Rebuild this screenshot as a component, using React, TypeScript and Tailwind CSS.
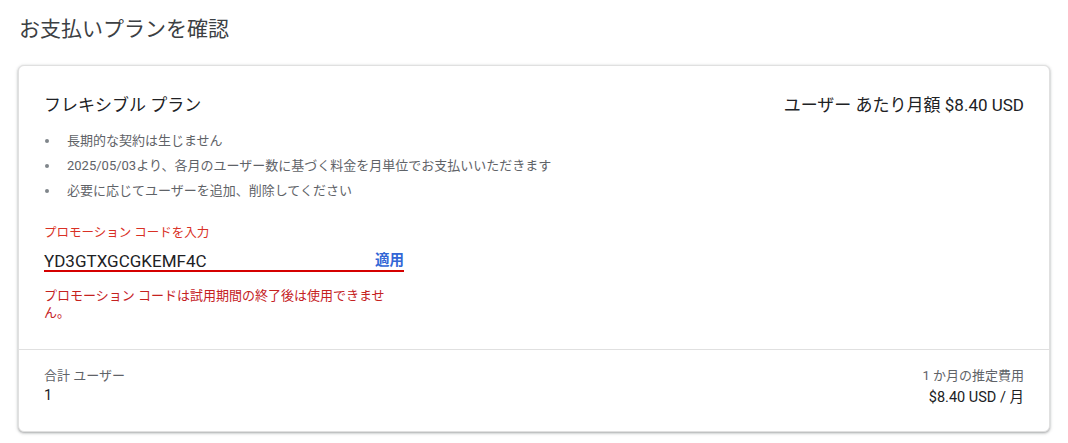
import React from "react";

export default function App() {
  const font = { fontFamily: 'Roboto, "Noto Sans CJK JP", sans-serif' };
  return (
    <div className="w-[1068px] h-[443px] bg-white px-[18px] pt-[13px]" style={font}>
      <h1 className="text-[21px] leading-[32px] text-[#3c4043] pl-[1px] font-normal">お支払いプランを確認</h1>
      <div className="mt-[20px] w-[1032px] rounded-[6px] border border-[#e0e0e0] shadow-[0_1px_2px_rgba(60,64,67,0.3),0_1px_3px_1px_rgba(60,64,67,0.15)] bg-white">
        <div className="px-[25px] pt-[27px] pb-[28px]">
          <div className="flex justify-between items-start">
            <div className="text-[17px] leading-[24px] text-[#202124]">フレキシブル プラン</div>
            <div className="text-[17px] leading-[24px] text-[#202124]">ユーザー あたり月額 $8.40 USD</div>
          </div>
          <ul className="mt-[11px] text-[13px] leading-[25px] text-[#5f6368]">
            {[
              "長期的な契約は生じません",
              "2025/05/03より、各月のユーザー数に基づく料金を月単位でお支払いいただきます",
              "必要に応じてユーザーを追加、削除してください",
            ].map((t) => (
              <li key={t} className="flex items-center">
                <span className="w-[23px] flex justify-start pl-[1px]">
                  <span className="w-[4px] h-[4px] rounded-full bg-[#80868b]" />
                </span>
                <span>{t}</span>
              </li>
            ))}
          </ul>
          <div className="mt-[22px] w-[360px]">
            <div className="text-[12.5px] leading-[16px] text-[#d93025]">プロモーション コードを入力</div>
            <div className="mt-[11px] flex justify-between items-end border-b-2 border-[#d50000]">
              <span className="text-[17px] leading-[18px] text-[#202124]">YD3GTXGCGKEMF4C</span>
              <span className="text-[14.5px] leading-[18px] font-bold text-[#3367d6]">適用</span>
            </div>
            <div className="mt-[15px] w-[350px] text-[13px] leading-[17px] text-[#c5221f]">
              プロモーション コードは試用期間の終了後は使用できません。
            </div>
          </div>
        </div>
        <div className="border-t border-[#e0e0e0] px-[25px] pt-[18px] pb-[23px] flex justify-between">
          <div>
            <div className="text-[13px] leading-[16px] text-[#5f6368]">合計 ユーザー</div>
            <div className="text-[14.5px] leading-[20px] text-[#202124] mt-[2px]">1</div>
          </div>
          <div className="text-right">
            <div className="text-[13px] leading-[16px] text-[#5f6368]">1 か月の推定費用</div>
            <div className="text-[14.5px] leading-[20px] text-[#202124] mt-[4px]">$8.40 USD / 月</div>
          </div>
        </div>
      </div>
    </div>
  );
}
